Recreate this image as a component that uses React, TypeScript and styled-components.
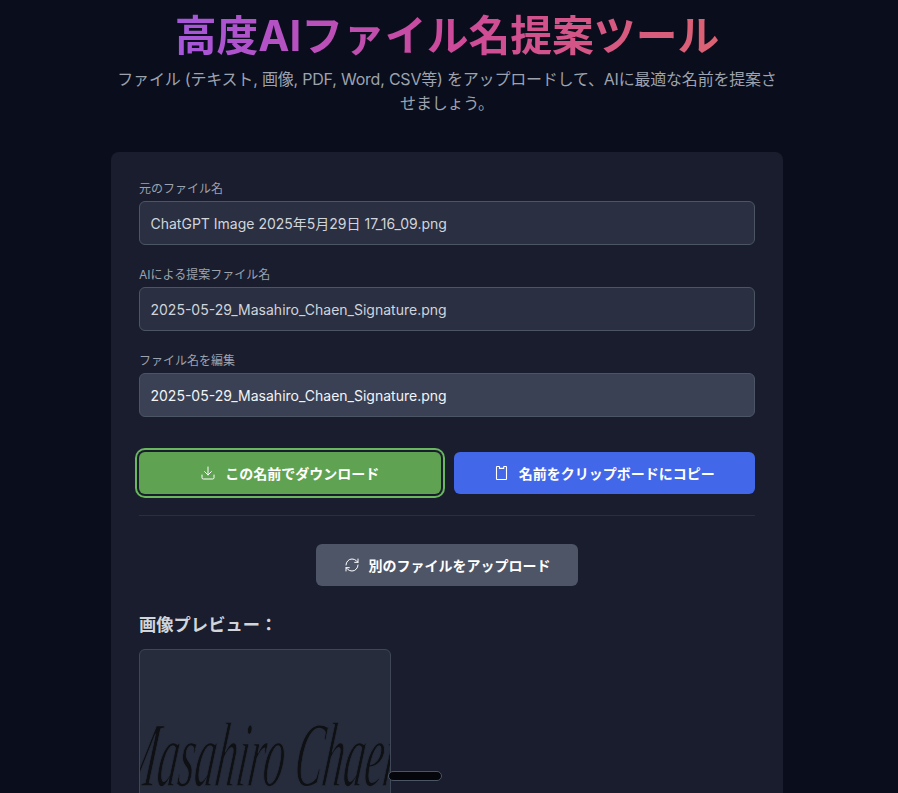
import React from "react";
import styled, { createGlobalStyle } from "styled-components";
import { Download, RefreshCw } from "lucide-react";

const Global = createGlobalStyle`
  html, body { margin: 0; padding: 0; height: 793px; overflow: hidden; background: #0a0d1c; }
  * { box-sizing: border-box; }
  body { font-family: Inter, "Noto Sans CJK JP", sans-serif; }
`;

const Page = styled.main`
  position: relative;
  width: 894px;
  height: 793px;
  overflow: hidden;
  display: flex;
  flex-direction: column;
  align-items: center;
`;

const Header = styled.header`
  width: 672px;
  text-align: center;
  padding-top: 10px;
`;

const Title = styled.h1`
  margin: 0;
  font-size: 41.8px;
  line-height: 52px;
  font-weight: 700;
  background: linear-gradient(90deg, #a656dc 0%, #cc4a9a 50%, #dc6272 100%);
  -webkit-background-clip: text;
  background-clip: text;
  color: transparent;
  width: max-content;
  margin-inline: auto;
`;

const Subtitle = styled.p`
  margin: 5px 0 0;
  font-size: 16px;
  line-height: 24px;
  letter-spacing: -0.2px;
  color: #9ca3af;
`;

const Card = styled.section`
  width: 672px;
  flex: none;
  margin-top: 37px;
  padding: 29px 28px 28px;
  background: #1a1d2e;
  border-radius: 8px;
  display: flex;
  flex-direction: column;
`;

const Field = styled.div`
  display: flex;
  flex-direction: column;
  margin-bottom: 22px;
`;

const Label = styled.label`
  font-size: 12px;
  line-height: 16px;
  color: #9ca3af;
  margin-bottom: 4px;
`;

const Input = styled.div<{ $editable?: boolean }>`
  height: 44px;
  padding: 0 10.5px;
  display: flex;
  align-items: center;
  font-size: 14px;
  border-radius: 6px;
  border: 1px solid #4b5563;
  background: ${(p) => (p.$editable ? "#3a4155" : "#2a2f42")};
  color: ${(p) => (p.$editable ? "#f3f4f6" : "#d1d5db")};
`;

const Actions = styled.div`
  display: grid;
  grid-template-columns: 1fr 1fr;
  gap: 13px;
  margin-top: 13px;
`;

const Button = styled.button<{ $bg: string; $ring?: boolean }>`
  height: 42px;
  border: 0;
  border-radius: 6px;
  background: ${(p) => p.$bg};
  color: #fff;
  font-family: inherit;
  font-size: 14px;
  font-weight: 700;
  display: flex;
  align-items: center;
  justify-content: center;
  gap: 9px;
  padding: 0;
  ${(p) => (p.$ring ? "box-shadow: 0 0 0 2px #1a1d2e, 0 0 0 4px #6ab85e;" : "")}
`;

const Divider = styled.hr`
  border: 0;
  height: 1px;
  background: #2a2e40;
  margin: 21px 0 28px;
  width: 100%;
`;

const Center = styled.div`
  display: flex;
  justify-content: center;
`;

const ResetButton = styled(Button)`
  width: 262px;
`;

const PreviewTitle = styled.h3`
  margin: 27px 0 12px;
  font-size: 17.3px;
  line-height: 24px;
  font-weight: 700;
  color: #d1d5db;
`;

const PreviewBox = styled.div`
  width: 252px;
  height: 252px;
  border: 1px solid #3f4655;
  border-radius: 6px;
  background: #262c3b;
  overflow: hidden;
  display: flex;
  align-items: center;
  justify-content: center;
`;

const Signature = styled.span`
  font-family: "Liberation Serif", serif;
  font-style: italic;
  font-size: 42px;
  white-space: nowrap;
  color: #0e1014;
  -webkit-text-stroke: 0.7px #262c3b;
  transform: translateY(-20px) scaleY(2.2) skewX(-16deg);
`;

const Pill = styled.div`
  position: absolute;
  left: 388px;
  top: 771px;
  width: 54px;
  height: 10px;
  border-radius: 5px;
  background: #05060c;
  border: 1px solid #4b5563;
`;

const ClipIcon = () => (
  <svg width="16" height="16" viewBox="0 0 16 16" fill="none" stroke="currentColor" strokeWidth="1.1">
    <path d="M5 1.5H3a.5.5 0 0 0-.5.5v12a.5.5 0 0 0 .5.5h9a.5.5 0 0 0 .5-.5V2a.5.5 0 0 0-.5-.5h-2" />
    <path d="M5.5 1.2v2.2h4.2V1.2" />
  </svg>
);

export default function App() {
  return (
    <Page>
      <Global />
      <Header>
        <Title>高度AIファイル名提案ツール</Title>
        <Subtitle>ファイル (テキスト, 画像, PDF, Word, CSV等) をアップロードして、AIに最適な名前を提案させましょう。</Subtitle>
      </Header>
      <Card>
        <Field>
          <Label>元のファイル名</Label>
          <Input>ChatGPT Image 2025年5月29日 17_16_09.png</Input>
        </Field>
        <Field>
          <Label>AIによる提案ファイル名</Label>
          <Input>2025-05-29_Masahiro_Chaen_Signature.png</Input>
        </Field>
        <Field>
          <Label>ファイル名を編集</Label>
          <Input $editable>2025-05-29_Masahiro_Chaen_Signature.png</Input>
        </Field>
        <Actions>
          <Button $bg="#5fa352" $ring>
            <Download size={16} strokeWidth={1.5} />
            この名前でダウンロード
          </Button>
          <Button $bg="#4267e8">
            <ClipIcon />
            名前をクリップボードにコピー
          </Button>
        </Actions>
        <Divider />
        <Center>
          <ResetButton $bg="#4d5567">
            <RefreshCw size={16} strokeWidth={1.5} />
            別のファイルをアップロード
          </ResetButton>
        </Center>
        <PreviewTitle>画像プレビュー：</PreviewTitle>
        <PreviewBox>
          <Signature>Masahiro Chaen</Signature>
        </PreviewBox>
      </Card>
      <Pill />
    </Page>
  );
}
